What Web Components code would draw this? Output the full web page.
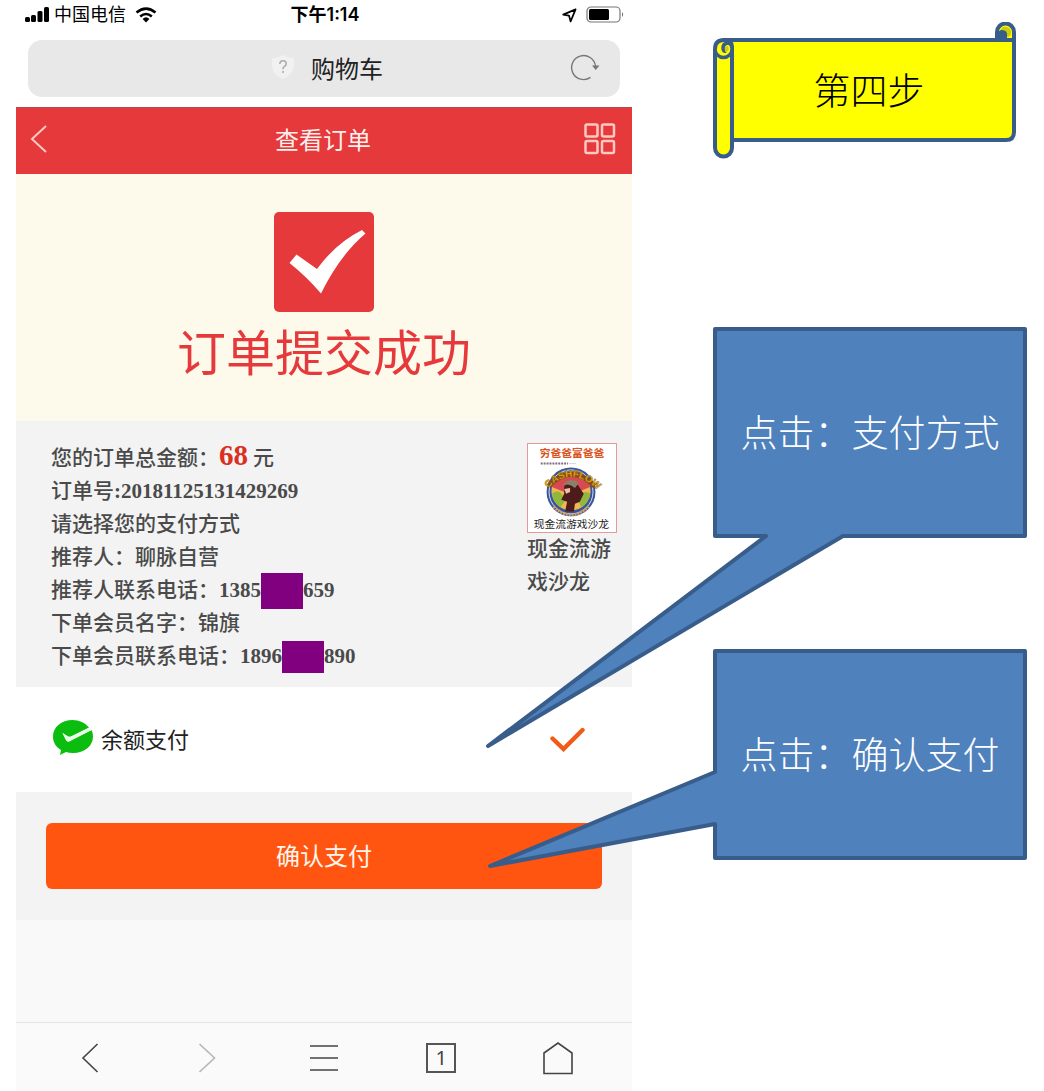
<!DOCTYPE html>
<html lang="zh-CN">
<head>
<meta charset="utf-8">
<meta name="viewport" content="width=device-width, initial-scale=1">
<title>查看订单</title>
<style>
  body{margin:0; background:#fff; font-family:"Liberation Sans","Noto Sans CJK SC",sans-serif;}
  .page{display:grid; grid-template-columns:minmax(0,1fr) 314px; column-gap:81px; padding:0 17px 0 16px; min-height:100vh;}
  .phone{display:flex; flex-direction:column;}
  .fill{flex:1; background:#f9f9f9;}
  .notes{position:relative; z-index:1; padding-top:22px;}
  .notes step-callout{margin-top:111px;}
  .notes step-banner + step-callout{margin-top:167px;}
</style>
</head>
<body>
<div class="page">
  <main class="phone">
    <status-bar carrier="中国电信" time="下午1:14"></status-bar>
    <address-bar>购物车</address-bar>
    <shop-header>查看订单</shop-header>
    <order-success>订单提交成功</order-success>
    <order-detail>
      <detail-line>您的订单总金额：<b slot="price">68</b><span slot="unit">元</span></detail-line>
      <detail-line>订单号<b>:20181125131429269</b></detail-line>
      <detail-line>请选择您的支付方式</detail-line>
      <detail-line>推荐人：聊脉自营</detail-line>
      <detail-line>推荐人联系电话：<b>1385</b><mask-block style="--h:36px"></mask-block><b>659</b></detail-line>
      <detail-line>下单会员名字：锦旗</detail-line>
      <detail-line>下单会员联系电话：<b>1896</b><mask-block></mask-block><b>890</b></detail-line>
      <product-thumb slot="product">现金流游戏沙龙</product-thumb>
    </order-detail>
    <pay-option>余额支付</pay-option>
    <pay-confirm>确认支付</pay-confirm>
    <div class="fill"></div>
    <browser-toolbar></browser-toolbar>
  </main>
  <aside class="notes">
    <step-banner>第四步</step-banner>
    <step-callout tail="bottom">点击：支付方式</step-callout>
    <step-callout tail="left">点击：确认支付</step-callout>
  </aside>
</div>

<script>
// small helper: open shadow root filled with markup
function define(name, render){
  customElements.define(name, class extends HTMLElement {
    constructor(){
      super();
      this.attachShadow({mode: 'open'});
    }
    connectedCallback(){
      this.shadowRoot.innerHTML = render(this);
    }
  });
}

define('status-bar', el => `
  <style>
    :host{display:grid; grid-template-columns:1fr auto 1fr; align-items:center; height:30px; padding:0 7px 0 9px;
          color:#000; font-size:18px; line-height:24px;}
    .left,.right{display:flex; align-items:center;}
    .left{gap:5px;}
    .left .wifi{margin-left:4px;}
    .right{justify-content:flex-end; gap:9px;}
    .time{font-family:Inter,"Noto Sans CJK SC",sans-serif; font-weight:600;}
    svg{display:block;}
  </style>
  <div class="left">
    <svg width="24" height="16" viewBox="0 0 24 16"><rect x="0" y="10" width="5" height="5" rx="1.5"/><rect x="6" y="8" width="5" height="7" rx="1.5"/><rect x="12.500" y="4" width="5" height="11" rx="1.5"/><rect x="19" y="0" width="5" height="15" rx="1.5"/></svg>
    <span>${el.getAttribute('carrier')}</span>
    <svg class="wifi" width="22" height="16" viewBox="0 0 22 16" fill="none" stroke="#000" stroke-width="2.6"><path d="M1.5 5.6Q11-2.4 20.5 5.6"/><path d="M5.2 9.4Q11 4.6 16.8 9.4"/><path d="M7.6 12Q11 8.6 14.4 12L11 15.4z" fill="#000" stroke="none"/></svg>
  </div>
  <span class="time">${el.getAttribute('time')}</span>
  <div class="right">
    <svg width="15" height="15" viewBox="0 0 15 15" fill="none" stroke="#000" stroke-width="1.7" stroke-linejoin="round"><path d="M13.6 1.4L1.2 6.6L7 7.6L8.6 13.4z"/></svg>
    <svg width="39" height="18" viewBox="0 0 39 18"><rect x="1" y="1" width="33" height="15" rx="4" fill="none" stroke="#777" stroke-width="1.2"/><rect x="3" y="3" width="20" height="11" rx="1.5"/><path d="M36 6Q38.4 8.5 36 11z" fill="#777"/></svg>
  </div>`);

define('address-bar', () => `
  <style>
    :host{display:block; padding:10px 12px;}
    .bar{display:grid; grid-template-columns:1fr auto 1fr; align-items:center; box-sizing:border-box; height:57px;
         padding:0 20px 3px 26px; border-radius:14px; background:#e8e8e8; color:#222; font-size:24px;}
    .name{display:flex; align-items:center; gap:16px; grid-column:2;}
    button{justify-self:end; display:block; padding:0; border:0; background:none;}
    svg{display:block;}
  </style>
  <div class="bar">
    <div class="name">
      <svg width="24" height="26" viewBox="0 0 24 26"><path d="M12 1Q7 4 1 4.5V12Q2 21 12 25Q22 21 23 12V4.5Q17 4 12 1z" fill="#f1f1f1"/><path d="M8.8 10Q9 6.8 12 6.8Q15.2 6.8 15.2 9.7Q15.2 11.6 13.2 12.7Q12 13.5 12 15.2" fill="none" stroke="#aaa" stroke-width="1.5"/><circle cx="12" cy="18" r="1" fill="#aaa"/></svg>
      <slot></slot>
    </div>
    <button aria-label="刷新">
      <svg width="30" height="28" viewBox="0 0 30 28"><path d="M20.5 24.4A12 12 0 1 1 25.5 13" fill="none" stroke="#777" stroke-width="1.4"/><path d="M22 12.5H29.5L25.700 17z" fill="#777"/></svg>
    </button>
  </div>`);

define('shop-header', () => `
  <style>
    :host{display:grid; grid-template-columns:1fr auto 1fr; align-items:center; box-sizing:border-box; height:67px;
          padding:0 16px 5px 14px; border-top:1px solid #b34b4b; background:#e5393b; color:#fff0ec; font-size:24px;}
    a{display:block; justify-self:start;}
    button{justify-self:end; padding:0; border:0; background:none;}
    svg{display:block; fill:none; stroke:#ffc9c2; stroke-width:2;}
    button svg{stroke-width:2.5;}
  </style>
  <a href="#" aria-label="返回"><svg width="18" height="30" viewBox="0 0 18 30"><path d="M16 2L2 15L16 28"/></svg></a>
  <slot></slot>
  <button aria-label="菜单"><svg width="32" height="32" viewBox="0 0 32 32"><rect x="1.5" y="1.5" width="12" height="12" rx="1.5"/><rect x="18" y="1.5" width="12" height="12" rx="1.5"/><rect x="1.5" y="18" width="12" height="12" rx="1.5"/><rect x="18" y="18" width="12" height="12" rx="1.5"/></svg></button>`);

define('order-success', () => `
  <style>
    :host{display:flex; flex-direction:column; align-items:center; gap:12px; padding:38px 0 37px; background:#fefaeb;
          color:#e5393b; font-size:49px; line-height:60px;}
    svg{display:block;}
  </style>
  <svg width="100" height="100" viewBox="0 0 100 100"><rect width="100" height="100" rx="5" fill="#e5393b"/><path d="M15.5 51L22.5 42.5L43 57Q62 31 88 18L91.5 21.5Q66 43 47 81.5Q33 65 15.5 51z" fill="#fff"/></svg>
  <slot></slot>`);

define('order-detail', () => `
  <style>
    :host{display:flex; justify-content:space-between; padding:19px 15px 16px 35px; background:#f3f3f3; color:#4a4a4a;
          font:500 21px/33px "Noto Sans CJK SC",sans-serif;}
    .lines{display:flex; flex-direction:column;}
  </style>
  <div class="lines"><slot></slot></div>
  <slot name="product"></slot>`);

define('detail-line', () => `
  <style>
    :host{display:block; height:33px; white-space:nowrap;}
    ::slotted(b){font-family:"Liberation Serif",serif;}
    ::slotted([slot=price]){margin-right:5px; color:#d9301f; font-size:29px; line-height:0;}
  </style>
  <slot></slot><slot name="price"></slot><slot name="unit"></slot>`);

define('mask-block', () => `
  <style>
    :host{display:inline-block; width:42px; height:var(--h,32px); margin:-4px 0; vertical-align:middle; background:#800080;}
  </style>`);

define('product-thumb', () => `
  <style>
    :host{display:block; width:90px; padding-top:3px;}
    svg{display:block; box-sizing:border-box; margin-bottom:-2px; border:1px solid #e39a98; background:#fff;}
    .title{font:700 11px "Noto Sans CJK SC",sans-serif; fill:#d9531c;}
    .foot{font:400 11px "Noto Sans CJK SC",sans-serif; fill:#222;}
    .logo{font:700 10px "Liberation Sans",sans-serif; fill:#f3c21c; stroke:#8a5a12; stroke-width:.5;}
  </style>
  <svg width="90" height="90" viewBox="0 0 90 90">
    <text class="title" x="12" y="13">穷爸爸富爸爸</text>
    <path d="M13 20H41" stroke="#7d6b7e" stroke-width="2" stroke-dasharray="2 1"/>
    <path d="M42 20H49" stroke="#bbb" stroke-width=".6"/>
    <circle cx="44" cy="49" r="25" fill="#38549b"/>
    <circle cx="44" cy="49" r="22.5" fill="none" stroke="#d8def0" stroke-width="1"/>
    <circle cx="44" cy="48" r="20" fill="#efb653"/>
    <path d="M24.5 44A20 20 0 0 1 63.5 44L44 52z" fill="#d84a53"/>
    <path d="M24.5 51Q33 44 38 58L33 65Q26 60 24.5 51zM63.5 51Q56 45 51 58L55 65Q62 60 63.5 51z" fill="#8fb83d"/>
    <path d="M37 43Q44 36 51 42L57 51L53 59L48 61L47 69H38L40 59L34 57L37 51z" fill="#4d1b1c"/>
    <path d="M35 42Q44 33 52 40L48 45Q42 40 35 42z" fill="#8b8067"/>
    <path d="M37 46L43 45V49L39 51z" fill="#e7c5a3"/>
    <path d="M26 64Q44 81 62 64" fill="none" stroke="#d6a05e" stroke-width="3" stroke-dasharray="2 1"/>
    <path d="M21 43Q44 19 68 43" fill="none" stroke="#8a4a12" stroke-width="5"/>
    <path id="arc" d="M17 49Q44 18 74 50" fill="none"/>
    <text class="logo"><textPath href="#arc" startOffset="5">CASHFLOW</textPath></text>
    <text class="foot" x="6" y="86">现金流游戏沙龙</text>
  </svg>
  <slot></slot>`);

define('pay-option', () => `
  <style>
    :host{display:block; background:#fff;}
    label{display:flex; align-items:center; box-sizing:border-box; height:105px; padding:0 47px 4px 36px; color:#222; font-size:22px;}
    span{flex:1; margin-left:6px;}
    input{appearance:none; width:0; height:0; margin:0;}
    svg{display:block;}
    .tick{visibility:hidden;}
    input:checked + .tick{visibility:visible;}
  </style>
  <label>
    <svg width="43" height="40" viewBox="0 0 43 40"><path d="M20.5 2C9.5 2 1 9 1 18.5C1 24.5 4 29 9 32L8 37L14 34Q17 35 21 35C32.5 35 41 28 41 18.5Q41 15 39.5 12L18 23Q15.5 24.5 14 22L10.5 15L16 18.5Q17.5 19.2 19 18.5L37 9.5Q31 2 20.5 2z" fill="#0bbd0f"/><path d="M10.5 15L16 18.5Q17.5 19.2 19 18.5L38 9.5L39.5 12L18 23Q15.5 24.5 14 22z" fill="#e9ffe8"/></svg>
    <span><slot></slot></span>
    <input type="radio" name="pay" checked>
    <svg class="tick" width="35" height="28" viewBox="0 0 35 28"><path d="M2.5 14.5L13.5 25L32.5 6" fill="none" stroke="#f15a17" stroke-width="4.4" stroke-linecap="round"/></svg>
  </label>`);

define('pay-confirm', () => `
  <style>
    :host{display:block; padding:31px 30px; background:#f3f3f3;}
    button{display:block; width:100%; height:66px; padding:0 0 3px; border:0; border-radius:6px; background:#ff5511; color:#fff6ee;
           font:400 24px "Noto Sans CJK SC",sans-serif;}
  </style>
  <button><slot></slot></button>`);

define('browser-toolbar', () => `
  <style>
    :host{display:block; border-top:1px solid #e4e4e4; background:#fafafa;}
    nav{display:grid; grid-template-columns:repeat(5,1fr); box-sizing:border-box; height:68px; padding:2px 15px 0;}
    button{display:grid; place-items:center; padding:0; border:0; background:none; color:#444; font:20px "Noto Sans",sans-serif;}
    svg{display:block; fill:none; stroke:#444; stroke-width:1.6;}
    button:disabled svg{stroke:#b5b5b5;}
    .tab{box-sizing:border-box; width:30px; height:30px; border:2px solid #555; line-height:26px;}
  </style>
  <nav>
    <button aria-label="后退"><svg width="18" height="32" viewBox="0 0 18 32"><path d="M16.5 2L2 16L16.5 30"/></svg></button>
    <button aria-label="前进" disabled><svg width="18" height="32" viewBox="0 0 18 32"><path d="M1.5 2L16.5 16L1.5 30"/></svg></button>
    <button aria-label="菜单"><svg width="30" height="28" viewBox="0 0 30 28"><path d="M1 2H29M1 14H29M1 26H29"/></svg></button>
    <button aria-label="标签页"><span class="tab">1</span></button>
    <button aria-label="主页"><svg width="30" height="34" viewBox="0 0 30 34"><path d="M1 12L15 2L29 12V32.5H1z"/></svg></button>
  </nav>`);

// scroll-shaped banner, rolled at its left and right ends
define('step-banner', () => `
  <style>
    :host{position:relative; display:grid; place-items:center; box-sizing:border-box; height:138px; padding:0 2px 4px 0;
          color:#000; font-size:37px; font-weight:300;}
    svg{position:absolute; top:0; left:0; fill:#ff0; stroke:#385d8a; stroke-width:4; stroke-linejoin:round;}
    span{position:relative;}
  </style>
  <svg width="304" height="138" viewBox="0 0 304 138">
    <path d="M11 18H301V110Q301 118 293 118H19V30Z"/>
    <path d="M2 27Q2 18 11 18Q19 18 19 25V126A8.5 8.5 0 0 1 2 126z"/>
    <path d="M2 27A8.5 8.5 0 1 0 19 27Q19 21 14 21Q10 22 10 26Q10 30 13 29" stroke-width="3.5"/>
    <path d="M14 24Q17 25 15 29L12 30V25z" fill="#cccc10" stroke="none"/>
    <path d="M284 18V10A8.5 8.5 0 0 1 301 10V18z"/>
    <path d="M287 10Q288 4 294 5Q299 7 298 12Q297 15 294 15L292 10z" fill="#cccc10" stroke="none"/>
    <path d="M285 17V13Q286 9 289 9Q294 9 293 14V17" fill="#385d8a" stroke-width="2"/>
  </svg>
  <span><slot></slot></span>`);

// outlines are drawn from the box's own corner, the tail runs out over the phone
const tails = {
  bottom: 'M2 2H312V209H130L-225 419L53 209H2z',
  left: 'M2 2H312V209H2V175L-223 217L2 123z'
};
define('step-callout', el => `
  <style>
    :host{position:relative; display:grid; place-items:center; box-sizing:border-box; height:211px; padding-bottom:3px;
          color:#fff; font-size:37px; font-weight:300;}
    svg{position:absolute; top:0; left:0; overflow:visible; pointer-events:none;
        fill:#4f81bd; stroke:#385d8a; stroke-width:4; stroke-linejoin:round;}
    span{position:relative;}
  </style>
  <svg width="314" height="211" viewBox="0 0 314 211"><path d="${tails[el.getAttribute('tail')]}"/></svg>
  <span><slot></slot></span>`);
</script>
</body>
</html>
